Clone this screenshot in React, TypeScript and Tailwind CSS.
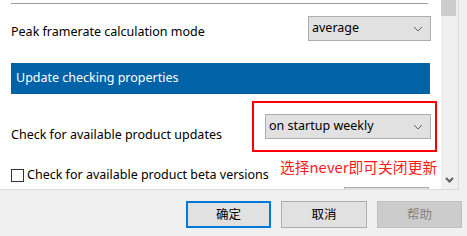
import React from "react";

const Chevron = ({ className = "" }: { className?: string }) => (
  <svg width="10" height="6" viewBox="0 0 10 6" className={className}>
    <path d="M1 1 L5 5 L9 1" fill="none" stroke="#606060" strokeWidth="1" />
  </svg>
);

const Combo = ({ text, className = "" }: { text: string; className?: string }) => (
  <div
    className={`flex h-[25px] items-center justify-between border border-[#adadad] bg-[#e1e1e1] pl-[3px] pr-[7px] text-[12.5px] text-black ${className}`}
  >
    <span>{text}</span>
    <Chevron />
  </div>
);

export default function App() {
  return (
    <div
      className="relative h-[236px] w-[467px] overflow-hidden bg-[#f0f0f0]"
      style={{ fontFamily: '"Noto Sans", "Noto Sans CJK SC", sans-serif' }}
    >
      {/* panel */}
      <div className="flex h-[190px] w-[459px] border-b border-r border-[#dcdcdc] bg-white">
        <div className="relative w-[441px] overflow-hidden pl-[11px] pr-[10px]">
          <div className="mt-[3px] h-px w-[417px] bg-[#a0a0a0]" />
          <div className="flex justify-between">
            <div className="pt-[20px] text-[12.5px] leading-[16px] text-black">
              Peak framerate calculation mode
            </div>
            <Combo text="average" className="mt-[12px] w-[123px]" />
          </div>
          <div className="mt-[22px] flex h-[31px] w-[419px] items-center bg-[#0063a8] pl-[5px] text-[12.5px] text-white">
            Update checking properties
          </div>
          <div className="flex justify-between">
            <div className="pt-[33px] text-[12.5px] leading-[16px] text-black">
              Check for available product updates
            </div>
            <Combo text="on startup weekly" className="mt-[20px] w-[166px]" />
          </div>
          <div className="mt-[24px] flex items-center gap-[3px] text-[12.5px] leading-[16px] text-black">
            <div className="h-[13px] w-[13px] border border-[#333333] bg-white" />
            <span>Check for available product beta versions</span>
          </div>
          <div className="mt-[4px] ml-[333px] h-[25px] w-[85px] border border-[#adadad] bg-[#e1e1e1]" />

          {/* annotation */}
          <div className="absolute left-[252px] top-[101px] h-[51px] w-[185px] border-2 border-[#ff0000]" />
          <div
            className="absolute left-[280px] top-[157px] whitespace-nowrap text-[14.8px] leading-[20px] text-[#ff1a1a]"
            style={{ fontFamily: '"Noto Sans CJK SC", sans-serif' }}
          >
            选择never即可关闭更新
          </div>
        </div>
        {/* scrollbar */}
        <div className="flex w-[17px] flex-col justify-between bg-[#f0f0f0]">
          <div className="h-[16px] w-[15px] bg-[#cdcdcd]" />
          <div className="mb-[6px] flex justify-center pr-[1px]">
            <svg width="9" height="6" viewBox="0 0 9 6">
              <path d="M1 1 L4.5 4.5 L8 1" fill="none" stroke="#606060" strokeWidth="2" />
            </svg>
          </div>
        </div>
      </div>

      {/* buttons */}
      <div
        className="ml-[186px] mt-[11px] flex gap-[10px] text-[12.5px]"
        style={{ fontFamily: '"Noto Sans CJK SC", sans-serif' }}
      >
        <div className="flex h-[27px] w-[85px] items-center justify-center border-2 border-[#0078d7] bg-[#e1e1e1] text-black">
          确定
        </div>
        <div className="flex h-[27px] w-[86px] items-center justify-center border border-[#adadad] bg-[#e1e1e1] text-black">
          取消
        </div>
        <div className="flex h-[27px] w-[85px] items-center justify-center border border-[#bfbfbf] bg-[#cccccc] text-[#838383]">
          帮助
        </div>
      </div>
    </div>
  );
}
